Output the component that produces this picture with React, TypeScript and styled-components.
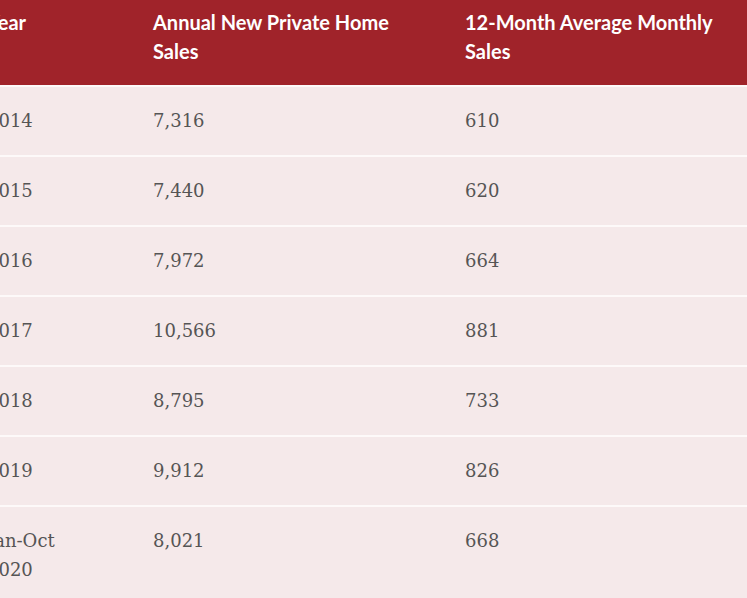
import React from 'react';
import styled, { createGlobalStyle } from 'styled-components';

const GlobalStyle = createGlobalStyle`
  html, body {
    margin: 0;
    padding: 0;
    background: #f5e9ea;
  }
`;

interface ISalesRow {
  year: string;
  annual: string;
  monthly: string;
}

const rows: ISalesRow[] = [
  { year: '2014', annual: '7,316', monthly: '610' },
  { year: '2015', annual: '7,440', monthly: '620' },
  { year: '2016', annual: '7,972', monthly: '664' },
  { year: '2017', annual: '10,566', monthly: '881' },
  { year: '2018', annual: '8,795', monthly: '733' },
  { year: '2019', annual: '9,912', monthly: '826' },
  { year: 'Jan-Oct 2020', annual: '8,021', monthly: '668' },
];

export default function App() {
  return (
    <>
      <GlobalStyle />
      <Viewport>
        <SalesTable>
          <colgroup>
            <col style={{ width: 166 }} />
            <col style={{ width: 312 }} />
            <col />
          </colgroup>
          <thead>
            <tr>
              <HeadCell>Year</HeadCell>
              <HeadCell>Annual New Private Home Sales</HeadCell>
              <HeadCell>12-Month Average Monthly Sales</HeadCell>
            </tr>
          </thead>
          <tbody>
            {rows.map((row) => (
              <BodyRow key={row.year}>
                <BodyCell>{row.year}</BodyCell>
                <BodyCell>{row.annual}</BodyCell>
                <BodyCell>{row.monthly}</BodyCell>
              </BodyRow>
            ))}
          </tbody>
        </SalesTable>
      </Viewport>
    </>
  );
}

const Viewport = styled.div`
  width: 747px;
  height: 598px;
  overflow: hidden;
  background: #f5e9ea;
`;

const SalesTable = styled.table`
  margin-left: -26px;
  width: 800px;
  table-layout: fixed;
  border-collapse: collapse;
  border-spacing: 0;
`;

const HeadCell = styled.th`
  background: #a0232a;
  color: #ffffff;
  font-family: Lato, 'Liberation Sans', sans-serif;
  font-weight: 700;
  font-size: 20px;
  line-height: 29px;
  text-align: left;
  vertical-align: top;
  padding: 8px 40px 19px 13px;
  height: 85px;
  box-sizing: border-box;
`;

const BodyRow = styled.tr`
  border-top: 2px solid #fdf9f9;
`;

const BodyCell = styled.td`
  font-family: 'DejaVu Serif', 'Liberation Serif', serif;
  font-size: 18px;
  line-height: 29px;
  color: #555555;
  padding: 19px 40px 20px 13px;
  vertical-align: top;
`;
